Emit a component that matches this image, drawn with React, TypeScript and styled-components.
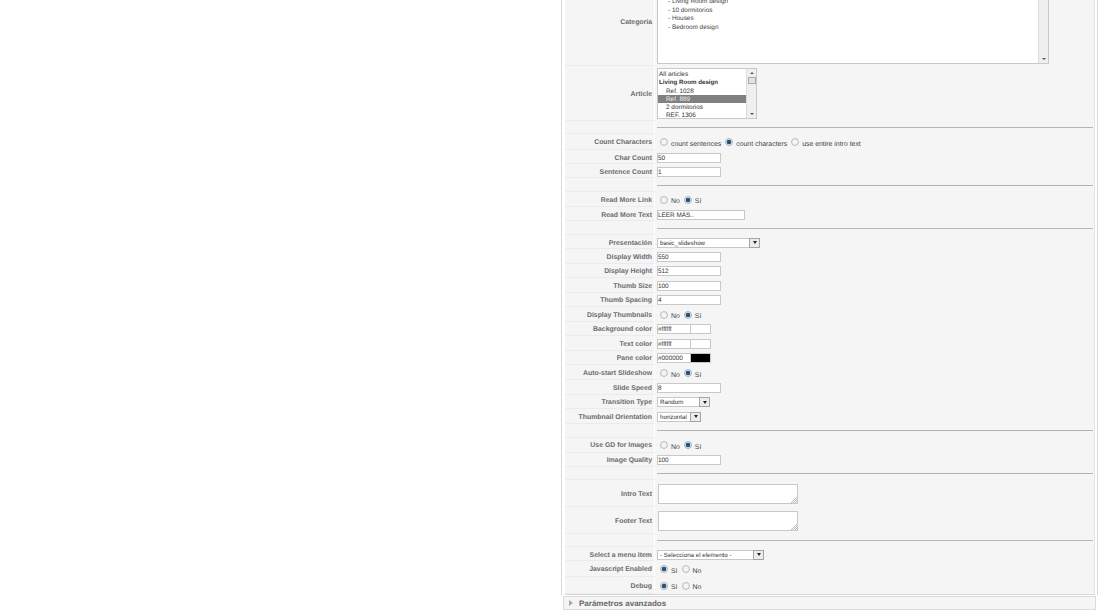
import type { ReactNode } from 'react'
import styled, { createGlobalStyle } from 'styled-components'

const GlobalStyle = createGlobalStyle`
    html, body {
        margin: 0;
        padding: 0;
        background: #fff;
        overflow: hidden;
    }
    #root {
        height: 611px;
        overflow: hidden;
    }
`

const Page = styled.div`
    width: 1100px;
    height: 611px;
    overflow: hidden;
    padding-left: 561px;
    box-sizing: border-box;
    font-family: "Liberation Sans", Arial, sans-serif;
    text-rendering: geometricPrecision;
`

// the screenshot was taken scrolled down a bit, so the top of the form is cut
const Wrapper = styled.div`
    width: 537px;
    margin-top: -23px;
`

const Panel = styled.div`
    width: 537px;
    height: 618px;
    box-sizing: border-box;
    border-left: 1px solid #d8d8d8;
    border-right: 1px solid #d8d8d8;
    padding: 0 2px 0 3px;
    background: #fff;
`

const Table = styled.div`
    height: 617px;
    background: #f5f5f5;
    border-right: 1px solid #e4e4e4;
    border-bottom: 1px solid #d8d8d8;
`

const Row = styled.div<{ $h: number }>`
    display: grid;
    grid-template-columns: 90px 1fr;
    height: ${p => p.$h}px;
    box-sizing: border-box;
`

const Label = styled.div<{ $flat?: boolean }>`
    display: flex;
    align-items: center;
    justify-content: flex-end;
    box-sizing: border-box;
    padding: ${p => (p.$flat ? 2 : 3)}px 2px 0 0;
    border-bottom: 1px solid #ebebeb;
    border-right: 1px solid #fff;
    font-size: 6.9px;
    font-weight: bold;
    color: #6c6c6c;
    white-space: nowrap;
`

const Value = styled.div<{ $flat?: boolean }>`
    display: flex;
    align-items: center;
    box-sizing: border-box;
    padding: ${p => (p.$flat ? 0 : 1)}px 0 0 2px;
    min-width: 0;
`

const CategoryValue = styled(Value)`
    align-items: flex-start;
    padding-top: 0;
`

const CategoryList = styled.div`
    width: 392px;
    height: 87px;
    box-sizing: border-box;
    border: 1px solid #c8c8c8;
    border-top: 0;
    background: #fff;
    position: relative;
    overflow: hidden;
    padding: 21px 0 0 10px;
`

const CategoryItem = styled.div`
    font-size: 6.4px;
    line-height: 8.6px;
    color: #444;
`

const ScrollTrack = styled.div<{ $w: number }>`
    position: absolute;
    top: 0;
    right: 0;
    bottom: 0;
    width: ${p => p.$w}px;
    background: #efefef;
    border-left: 1px solid #dcdcdc;
    display: flex;
    flex-direction: column;
    align-items: center;
    justify-content: flex-end;
`

const ScrollArrow = styled.span<{ $up?: boolean }>`
    display: block;
    width: 0;
    height: 0;
    margin: 3px 0;
    border-left: 2px solid transparent;
    border-right: 2px solid transparent;
    ${p => (p.$up ? 'border-bottom: 2px solid #555;' : 'border-top: 2px solid #555;')}
`

const ScrollThumb = styled.span`
    display: block;
    width: 8px;
    height: 9px;
    box-sizing: border-box;
    border: 1px solid #aaa;
    background: #dfe3e6;
    margin-bottom: 26px;
`

const ArticleBox = styled.div`
    width: 100px;
    height: 51px;
    box-sizing: border-box;
    border: 1px solid #c8c8c8;
    background: #fff;
    position: relative;
    overflow: hidden;
    padding-top: 1px;
`

const ArticleScroll = styled(ScrollTrack)`
    justify-content: space-between;
`

const ArticleItem = styled.div<{ $bold?: boolean; $selected?: boolean; $indent?: boolean }>`
    width: 88px;
    height: 8.3px;
    line-height: 9.8px;
    font-size: ${p => (p.$bold ? 6.2 : 6.4)}px;
    padding-left: ${p => (p.$indent ? 8 : 1)}px;
    font-weight: ${p => (p.$bold ? 'bold' : 'normal')};
    color: ${p => (p.$selected ? '#eee' : '#333')};
    background: ${p => (p.$selected ? '#808080' : 'transparent')};
    white-space: nowrap;
`

const Divider = styled.div`
    width: 100%;
    height: 1px;
    background: #b4b4b4;
    margin-right: 1px;
`

const SepLabel = styled.div`
    border-bottom: 1px solid #ebebeb;
    border-right: 1px solid #fff;
`

const Input = styled.div<{ $w: number }>`
    width: ${p => p.$w}px;
    height: 10px;
    box-sizing: border-box;
    border: 1px solid #c8c8c8;
    background: #fff;
    font-size: 6.4px;
    line-height: 10px;
    color: #333;
    white-space: nowrap;
    overflow: hidden;
`

const RadioGroup = styled.div`
    display: flex;
    align-items: center;
    padding-left: 3px;
`

const RadioOption = styled.label`
    display: flex;
    align-items: center;
    margin-right: 4px;
`

const Radio = styled.span<{ $on?: boolean }>`
    flex: none;
    width: 8px;
    height: 8px;
    border-radius: 50%;
    box-sizing: border-box;
    border: 1px solid ${p => (p.$on ? '#a3b4c6' : '#bdbdbd')};
    background: ${p => (p.$on ? 'radial-gradient(circle, #2f4f6f 0 2px, #dfe8f0 2.6px)' : 'radial-gradient(circle, #f4f4f4 0 2px, #dcdcdc 4px)')};
    margin-right: 3px;
`

const RadioText = styled.span`
    font-size: 6.9px;
    color: #444;
    position: relative;
    top: 2px;
    white-space: nowrap;
`

const SelectBox = styled.div<{ $w: number }>`
    width: ${p => p.$w}px;
    height: 10px;
    box-sizing: border-box;
    border: 1px solid #c8c8c8;
    background: #fff;
    display: flex;
    justify-content: space-between;
    font-size: 6.2px;
    line-height: 10px;
    color: #333;
    padding-left: 2px;
    white-space: nowrap;
`

const SelectButton = styled.span`
    width: 11px;
    height: 10px;
    margin: -1px -1px -1px 0;
    flex: none;
    box-sizing: border-box;
    border: 1px solid #a4a4a4;
    background: #ececec;
    display: flex;
    align-items: center;
    justify-content: center;
    &::after {
        content: "";
        border-left: 2.5px solid transparent;
        border-right: 2.5px solid transparent;
        border-top: 3px solid #222;
    }
`

const ColorField = styled.div`
    display: flex;
`

const ColorInput = styled(Input)`
    border-right: 0;
`

const Swatch = styled.span<{ $color: string }>`
    width: 21px;
    height: 10px;
    box-sizing: border-box;
    border: 1px solid #c8c8c8;
    background: ${p => p.$color};
`

const TextArea = styled.div`
    width: 140px;
    height: 20px;
    margin-left: 1px;
    box-sizing: border-box;
    border: 1px solid #c8c8c8;
    background: #fff;
    position: relative;
`

const Grip = styled.svg`
    position: absolute;
    right: 0;
    bottom: 0;
    width: 6px;
    height: 6px;
`

const Accordion = styled.div`
    width: 533px;
    height: 14px;
    margin: 1px 0 0 2px;
    box-sizing: border-box;
    border: 1px solid #dcdcdc;
    background: #f5f5f5;
    display: flex;
    align-items: center;
    padding-left: 5px;
    gap: 6px;
    font-size: 8px;
    font-weight: bold;
    color: #666;
`

const Arrow = styled.span`
    width: 0;
    height: 0;
    border-top: 3px solid transparent;
    border-bottom: 3px solid transparent;
    border-left: 4px solid #9fb08f;
`

const Separator = ({ h }: { h: number }) => (
    <Row $h={h}>
        <SepLabel />
        <Value $flat>
            <Divider />
        </Value>
    </Row>
)

const Field = ({ label, h = 14.5, flat, children }: { label: string; h?: number; flat?: boolean; children: ReactNode }) => (
    <Row $h={h}>
        <Label $flat={flat}>{label}</Label>
        <Value $flat={flat}>{children}</Value>
    </Row>
)

const Radios = ({ options }: { options: [string, boolean][] }) => (
    <RadioGroup>
        {options.map(([text, on]) => (
            <RadioOption key={text}>
                <Radio $on={on} />
                <RadioText>{text}</RadioText>
            </RadioOption>
        ))}
    </RadioGroup>
)

const ResizeGrip = () => (
    <Grip viewBox="0 0 6 6">
        <path d="M6 0L0 6M6 2L2 6M6 4L4 6" stroke="#999" strokeWidth="0.7" />
    </Grip>
)

const NoSi: [string, boolean][] = [['No', false], ['Sí', true]]
const SiNo: [string, boolean][] = [['Sí', true], ['No', false]]

function App() {
    return (
        <>
            <GlobalStyle />
            <Page>
                <Wrapper>
                    <Panel>
                        <Table>
                            <Row $h={89}>
                                <Label $flat>Categoría</Label>
                                <CategoryValue>
                                    <CategoryList>
                                        <CategoryItem>- Living Room design</CategoryItem>
                                        <CategoryItem>- 10 dormitorios</CategoryItem>
                                        <CategoryItem>- Houses</CategoryItem>
                                        <CategoryItem>- Bedroom design</CategoryItem>
                                        <ScrollTrack $w={9}>
                                            <ScrollArrow />
                                        </ScrollTrack>
                                    </CategoryList>
                                </CategoryValue>
                            </Row>
                            <Row $h={55}>
                                <Label $flat>Article</Label>
                                <Value $flat>
                                    <ArticleBox>
                                        <ArticleItem>All articles</ArticleItem>
                                        <ArticleItem $bold>Living Room design</ArticleItem>
                                        <ArticleItem $indent>Ref. 1028</ArticleItem>
                                        <ArticleItem $indent $selected>Ref. 889</ArticleItem>
                                        <ArticleItem $indent>2 dormitorios</ArticleItem>
                                        <ArticleItem $indent>REF. 1306</ArticleItem>
                                        <ArticleScroll $w={9}>
                                            <ScrollArrow $up />
                                            <ScrollThumb />
                                            <ScrollArrow />
                                        </ArticleScroll>
                                    </ArticleBox>
                                </Value>
                            </Row>
                            <Separator h={13} />
                            <Field label="Count Characters" h={16} flat>
                                <Radios options={[['count sentences', false], ['count characters', true], ['use entire intro text', false]]} />
                            </Field>
                            <Field label="Char Count" h={14}><Input $w={64}>50</Input></Field>
                            <Field label="Sentence Count" h={14}><Input $w={64}>1</Input></Field>
                            <Separator h={14} />
                            <Field label="Read More Link" h={15} flat><Radios options={NoSi} /></Field>
                            <Field label="Read More Text" h={14}><Input $w={88}>LEER MÁS..</Input></Field>
                            <Separator h={14} />
                            <Field label="Presentación" h={14}><SelectBox $w={103}>basic_slideshow<SelectButton /></SelectBox></Field>
                            <Field label="Display Width"><Input $w={64}>550</Input></Field>
                            <Field label="Display Height"><Input $w={64}>512</Input></Field>
                            <Field label="Thumb Size"><Input $w={64}>100</Input></Field>
                            <Field label="Thumb Spacing"><Input $w={64}>4</Input></Field>
                            <Field label="Display Thumbnails"><Radios options={NoSi} /></Field>
                            <Field label="Background color">
                                <ColorField><ColorInput $w={33}>#ffffff</ColorInput><Swatch $color="#fff" /></ColorField>
                            </Field>
                            <Field label="Text color">
                                <ColorField><ColorInput $w={33}>#ffffff</ColorInput><Swatch $color="#fff" /></ColorField>
                            </Field>
                            <Field label="Pane color">
                                <ColorField><ColorInput $w={33}>#000000</ColorInput><Swatch $color="#000" /></ColorField>
                            </Field>
                            <Field label="Auto-start Slideshow" h={15}><Radios options={NoSi} /></Field>
                            <Field label="Slide Speed"><Input $w={64}>8</Input></Field>
                            <Field label="Transition Type"><SelectBox $w={53}>Random<SelectButton /></SelectBox></Field>
                            <Field label="Thumbnail Orientation"><SelectBox $w={44}>horizontal<SelectButton /></SelectBox></Field>
                            <Separator h={14} />
                            <Field label="Use GD for Images" h={15} flat><Radios options={NoSi} /></Field>
                            <Field label="Image Quality" h={14}><Input $w={64}>100</Input></Field>
                            <Separator h={13.5} />
                            <Field label="Intro Text" h={27} flat>
                                <TextArea><ResizeGrip /></TextArea>
                            </Field>
                            <Field label="Footer Text" h={27} flat>
                                <TextArea><ResizeGrip /></TextArea>
                            </Field>
                            <Separator h={13} />
                            <Field label="Select a menu item" h={14}><SelectBox $w={107}>- Selecciona el elemento -<SelectButton /></SelectBox></Field>
                            <Field label="Javascript Enabled" h={16} flat><Radios options={SiNo} /></Field>
                            <Field label="Debug" h={17} flat><Radios options={SiNo} /></Field>
                        </Table>
                    </Panel>
                    <Accordion><Arrow />Parámetros avanzados</Accordion>
                </Wrapper>
            </Page>
        </>
    )
}

export default App
